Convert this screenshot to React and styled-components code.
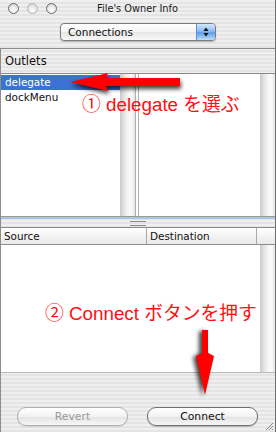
import React from 'react';
import styled, { createGlobalStyle } from 'styled-components';

const GlobalStyle = createGlobalStyle`
  html, body { margin: 0; padding: 0; background: #ffffff; }
  body { font-family: "DejaVu Sans", "Liberation Sans", sans-serif; }
`;

const stripes = `repeating-linear-gradient(to bottom, #efefef 0px, #efefef 2px, #e4e4e4 2px, #e4e4e4 4px)`;

const Window = styled.div`
  position: relative;
  width: 276px;
  height: 432px;
  display: flex;
  flex-direction: column;
  background: ${stripes};
  overflow: hidden;
  box-sizing: border-box;
  border-right: 1px solid #6e6e6e;
`;

const TitleBar = styled.div`
  height: 16px;
  display: grid;
  grid-template-columns: 1fr auto 1fr;
  align-items: center;
`;

const Lights = styled.div`
  display: flex;
  gap: 8px;
  padding-left: 8px;
`;

const Light = styled.span`
  width: 9px;
  height: 9px;
  border-radius: 50%;
  border: 1px solid ${p => (p.$faint ? '#b4b4b4' : '#6a6a6a')};
  background: radial-gradient(circle at 50% 70%, #ffffff 0%, #e6e6e6 55%, #c4c4c4 100%);
`;

const Title = styled.div`
  font-size: 9.8px;
  color: #1a1a1a;
`;

const Toolbar = styled.div`
  height: 32px;
  display: flex;
  align-items: center;
  justify-content: center;
  padding-left: 1px;
`;

const Popup = styled.div`
  width: 154px;
  height: 16px;
  display: flex;
  border: 1px solid #7c7c7c;
  border-radius: 4px;
  overflow: hidden;
  background: linear-gradient(to bottom, #ffffff 0%, #f4f4f4 50%, #e6e6e6 51%, #f8f8f8 100%);
  box-shadow: 0 1px 1px rgba(0, 0, 0, 0.25);
`;

const PopupLabel = styled.div`
  flex: 1;
  font-size: 10.5px;
  line-height: 16px;
  padding-left: 7px;
  color: #111;
`;

const PopupCap = styled.div`
  width: 18px;
  display: flex;
  align-items: center;
  justify-content: center;
  border-left: 1px solid #5f8fc8;
  background: linear-gradient(to bottom, #d4e8fc 0%, #8fbdf0 45%, #5f9ce6 55%, #bfe0fb 100%);
`;

const Panel = styled.div`
  flex: 1;
  display: flex;
  flex-direction: column;
  border-top: 1px solid #8c8c8c;
  border-left: 1px solid #8c8c8c;
`;

const SectionLabel = styled.div`
  height: 24px;
  display: flex;
  align-items: center;
  padding-left: 4px;
  font-size: 11.5px;
  color: #111;
`;

const UpperTable = styled.div`
  height: 142px;
  display: flex;
  background: #fff;
  border-top: 1px solid #8a8a8a;
  border-bottom: 1px solid #9a9a9a;
`;

const Pane = styled.div`
  display: flex;
  width: ${p => p.$width || 'auto'};
  flex: ${p => (p.$width ? 'none' : '1')};
  border-left: ${p => (p.$divided ? '1px solid #b0b0b0' : 'none')};
  border-right: ${p => (p.$edge ? '1px solid #b0b0b0' : 'none')};
  margin-right: ${p => (p.$edge ? '2px' : '0')};
`;

const List = styled.div`
  flex: 1;
  padding-top: 1px;
`;

const Row = styled.div`
  height: 15px;
  line-height: 15px;
  padding-left: 4px;
  font-size: 10.4px;
  color: ${p => (p.$selected ? '#ffffff' : '#111111')};
  background: ${p => (p.$selected ? '#3b72d4' : 'transparent')};
`;

const Track = styled.div`
  width: 15px;
  background: linear-gradient(to right, #c9c9c9 0%, #e2e2e2 25%, #f6f6f6 55%, #fbfbfb 75%, #e4e4e4 100%);
`;

const Splitter = styled.div`
  display: flex;
  justify-content: center;
  align-items: center;
  border-top: 2px solid #a9c6e8;
  box-sizing: border-box;
  height: 10px;
`;

const Grip = styled.div`
  width: 16px;
  height: 3px;
  border-top: 1px solid #8e8e8e;
  border-bottom: 1px solid #8e8e8e;
`;

const LowerTable = styled.div`
  flex: none;
  height: 144px;
  display: flex;
  flex-direction: column;
  background: #fff;
  border-top: 1px solid #8a8a8a;
  border-bottom: 1px solid #b8b8b8;
`;

const Header = styled.div`
  height: 16px;
  display: grid;
  grid-template-columns: 146px 110px 1fr;
  border-bottom: 1px solid #8e8e8e;
  background: linear-gradient(to bottom, #ffffff 0%, #f3f3f3 50%, #e9e9e9 100%);
`;

const HeaderCell = styled.div`
  font-size: 10.4px;
  line-height: 16px;
  padding-left: 3px;
  color: #111;
  border-right: ${p => (p.$last ? 'none' : '1px solid #a8a8a8')};
`;

const Body = styled.div`
  flex: 1;
  display: flex;
`;

const BodyContent = styled.div`
  flex: 1;
`;

const ButtonBar = styled.div`
  position: relative;
  flex: 1;
  display: flex;
  align-items: flex-end;
  gap: 19px;
  padding: 0 0 6px 16px;
`;

const Button = styled.div`
  width: 109px;
  height: 17px;
  border-radius: 9px;
  border: 1px solid ${p => (p.$disabled ? '#b0b0b0' : '#6f6f6f')};
  background: linear-gradient(to bottom, #ffffff 0%, #f2f2f2 50%, #e3e3e3 52%, #f7f7f7 100%);
  box-shadow: 0 1px 1px rgba(0, 0, 0, ${p => (p.$disabled ? '0.08' : '0.2')});
  font-size: 10.8px;
  line-height: 17px;
  text-align: center;
  color: ${p => (p.$disabled ? '#9a9a9a' : '#111')};
`;

const ResizeGrip = styled.svg`
  position: absolute;
  right: 1px;
  bottom: 1px;
`;

const Note = styled.div`
  position: absolute;
  left: ${p => p.$x}px;
  top: ${p => p.$y}px;
  font-family: "Liberation Sans", "Noto Sans CJK JP", sans-serif;
  font-size: 18.8px;
  line-height: 20px;
  color: #ff1010;
  white-space: nowrap;
`;

const Arrow = styled.svg`
  position: absolute;
  left: ${p => p.$x}px;
  top: ${p => p.$y}px;
  overflow: visible;
  filter: drop-shadow(${p => p.$shadow} rgba(0, 0, 0, 0.75));
`;

export default function App() {
  return (
    <>
      <GlobalStyle />
      <Window>
        <TitleBar>
          <Lights>
            <Light />
            <Light $faint />
            <Light />
          </Lights>
          <Title>File's Owner Info</Title>
          <div />
        </TitleBar>
        <Toolbar>
          <Popup>
            <PopupLabel>Connections</PopupLabel>
            <PopupCap>
              <svg width="6" height="10" viewBox="0 0 6 10">
                <path d="M3 0.5 L5.5 4 L0.5 4 Z" fill="#111" />
                <path d="M3 9.5 L5.5 6 L0.5 6 Z" fill="#111" />
              </svg>
            </PopupCap>
          </Popup>
        </Toolbar>
        <Panel>
          <SectionLabel>Outlets</SectionLabel>
          <UpperTable>
            <Pane $width="134px" $edge>
              <List>
                <Row $selected>delegate</Row>
                <Row>dockMenu</Row>
              </List>
              <Track />
            </Pane>
            <Pane $divided>
              <List />
              <Track />
            </Pane>
          </UpperTable>
          <Splitter>
            <Grip />
          </Splitter>
          <LowerTable>
            <Header>
              <HeaderCell>Source</HeaderCell>
              <HeaderCell>Destination</HeaderCell>
              <HeaderCell $last />
            </Header>
            <Body>
              <BodyContent />
              <Track />
            </Body>
          </LowerTable>
          <ButtonBar>
            <Button $disabled>Revert</Button>
            <Button>Connect</Button>
            <ResizeGrip width="10" height="10" viewBox="0 0 10 10">
              <path d="M9 2 L2 9 M9 5 L5 9 M9 8 L8 9" stroke="#8a8a8a" strokeWidth="1" />
            </ResizeGrip>
          </ButtonBar>
        </Panel>

        <Note $x={82} $y={95}>① delegate を選ぶ</Note>
        <Note $x={45} $y={304}>② Connect ボタンを押す</Note>

        <Arrow $x={64} $y={68} width="124" height="30" $shadow="1px 3px 2px">
          <polygon points="6,14 44,5 42,10 116,10 116,18 42,18 44,23" fill="#ff0000" />
        </Arrow>
        <Arrow $x={190} $y={325} width="30" height="75" $shadow="-3px 1px 2px">
          <polygon points="12,5 18,5 18,28 24,31 15,70 6,31 12,28" fill="#ff0000" />
        </Arrow>
      </Window>
    </>
  );
}
